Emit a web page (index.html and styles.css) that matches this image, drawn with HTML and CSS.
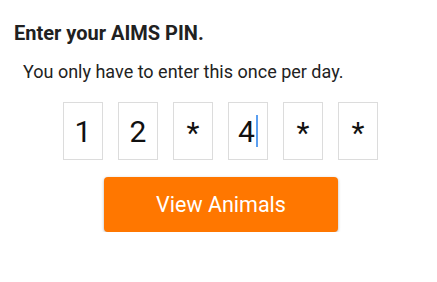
FILE: index.html
```html
<!DOCTYPE html>
<html>
<head>
<meta charset="utf-8">
<link rel="stylesheet" href="styles.css">
</head>
<body>
<div class="screen">
  <h1 class="title">Enter your AIMS PIN.</h1>
  <p class="subtitle">You only have to enter this once per day.</p>
  <div class="pin-row">
    <div class="pin-box">1</div>
    <div class="pin-box">2</div>
    <div class="pin-box star">*</div>
    <div class="pin-box"><span>4</span><span class="cursor"></span></div>
    <div class="pin-box star">*</div>
    <div class="pin-box star">*</div>
  </div>
  <div class="actions">
    <button class="btn">View Animals</button>
  </div>
</div>
</body>
</html>
```
FILE: styles.css
```css
html, body {
  margin: 0;
  padding: 0;
  background: #ffffff;
}
.screen {
  font-family: Roboto, "Noto Sans", sans-serif;
  padding: 21px 0 0 0;
}
.title {
  margin: 0 0 0 14px;
  font-size: 20px;
  font-weight: 700;
  color: #212121;
  line-height: 24px;
}
.subtitle {
  margin: 16px 0 0 23px;
  font-size: 18px;
  font-weight: 400;
  color: #222222;
  line-height: 22px;
}
.pin-row {
  display: flex;
  gap: 15px;
  margin: 19px 0 0 63px;
}
.pin-box {
  box-sizing: border-box;
  width: 40px;
  height: 58px;
  border: 1px solid #dcdcdc;
  display: flex;
  align-items: center;
  justify-content: center;
  font-size: 30px;
  color: #111111;
}
.pin-box.star {
  align-items: flex-start;
  padding-top: 12px;
}
.cursor {
  display: inline-block;
  width: 2px;
  height: 32px;
  background: #5a9ef0;
  margin-left: 1px;
}
.actions {
  margin: 17px 0 0 104px;
}
.btn {
  width: 234px;
  height: 55px;
  border: none;
  border-radius: 4px;
  background: #ff7700;
  color: #ffffff;
  font-family: Roboto, "Noto Sans", sans-serif;
  font-size: 21.5px;
  box-shadow: 0 1px 3px rgba(0,0,0,0.3);
  padding: 0;
}
```
